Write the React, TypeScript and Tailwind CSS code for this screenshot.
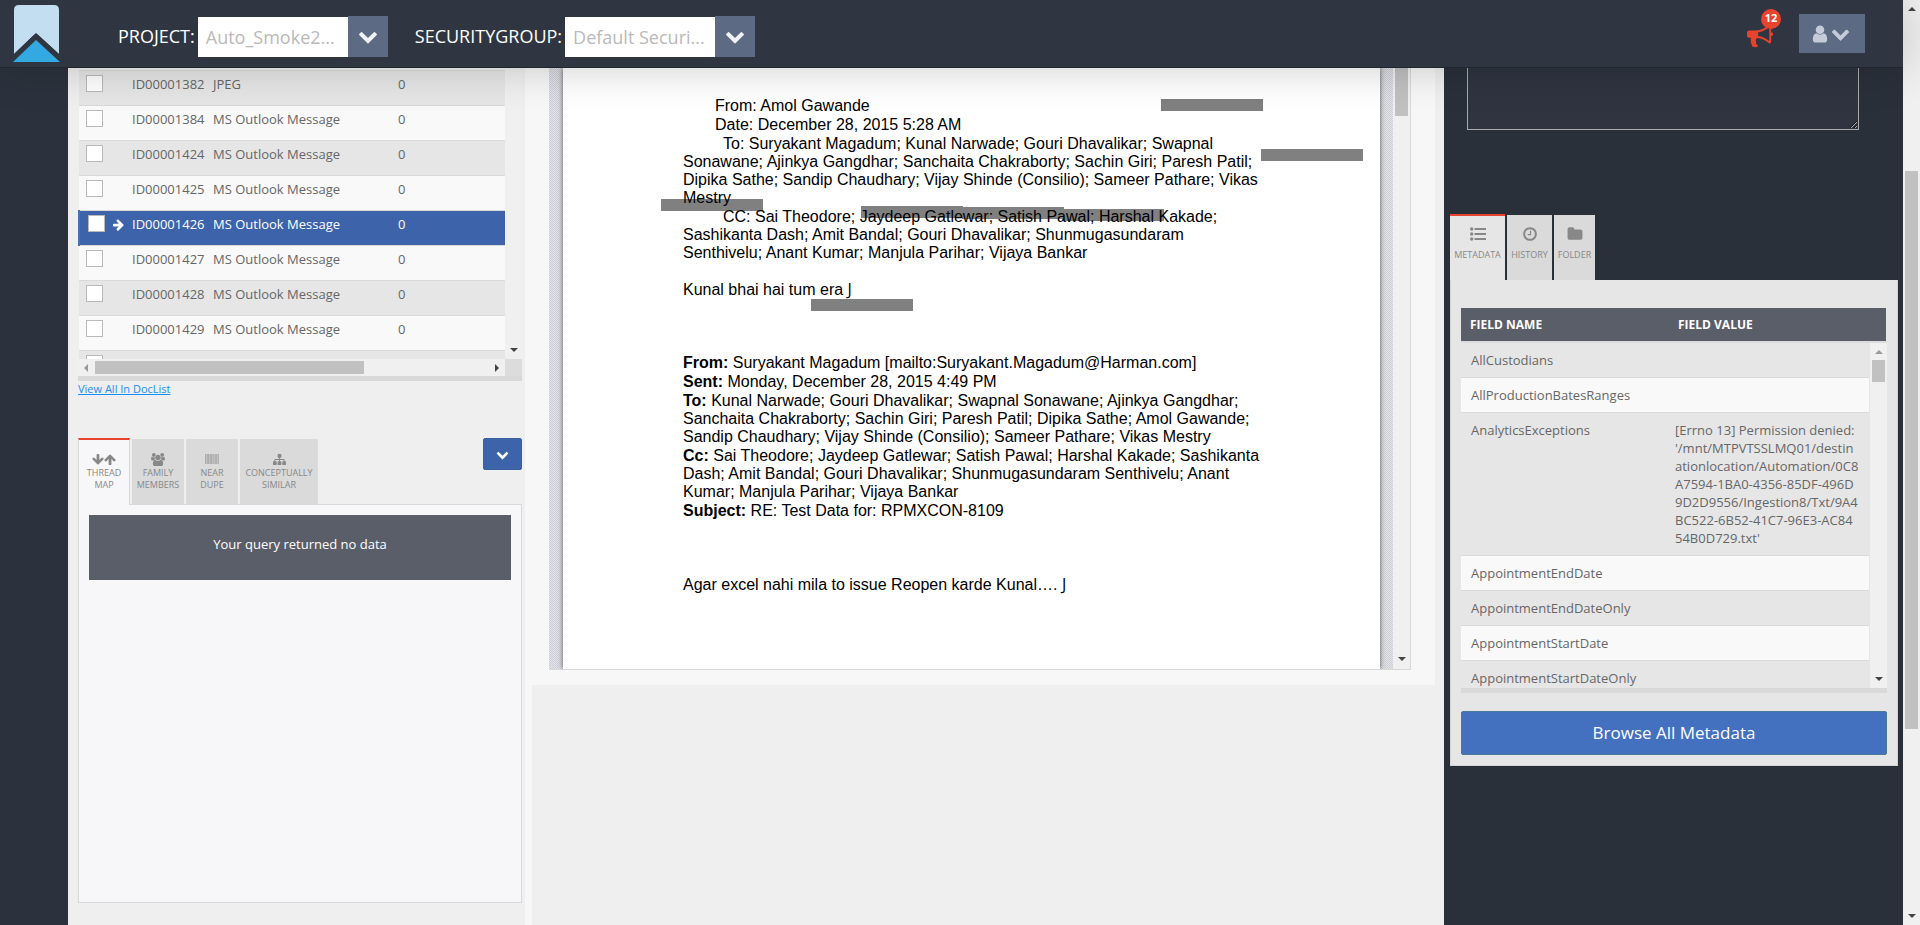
import type { ReactNode } from "react";

const PATHS = {
  chevron:
    "M1683 808l-742 741q-19 19-45 19t-45-19l-742-741q-19-19-19-45.5t19-45.5l166-165q19-19 45-19t45 19l531 531 531-531q19-19 45-19t45 19l166 165q19 19 19 45.5t-19 45.5z",
  arrow:
    "M1611 971q0 51-37 90l-75 75q-38 38-91 38-54 0-90-38l-294-293v704q0 52-37.5 84.5t-90.5 32.5h-128q-53 0-90.5-32.5t-37.5-84.5v-704l-294 293q-36 38-90 38t-90-38l-75-75q-38-38-38-90 0-53 38-91l651-651q35-37 90-37 54 0 91 37l651 651q37 39 37 91z",
  bullhorn:
    "M1664 640q53 0 90.5 37.5t37.5 90.5-37.5 90.5-90.5 37.5v384q0 52-38 90t-90 38q-417-347-812-380-58 19-91 66t-31 100.5 40 92.5q-20 33-23 65.5t6 58 33.5 55 48 50 61.5 50.5q-29 58-111.5 83t-168.5 11.5-132-55.5q-7-23-29.5-87.5t-32-94.5-23-89-15-101 3.5-98.5 22-110.5h-122q-66 0-113-47t-47-113v-192q0-66 47-113t113-47h480q435 0 896-384 52 0 90 38t38 90v384zm-128 604v-954q-394 302-768 343v270q377 42 768 341z",
  user: "M1536 1399q0 109-62.5 187t-150.5 78h-854q-88 0-150.5-78t-62.5-187q0-85 8.5-160.5t31.5-152 58.5-131 94-89 134.5-34.5q131 128 313 128t313-128q76 0 134.5 34.5t94 89 58.5 131 31.5 152 8.5 160.5zm-256-887q0 159-112.5 271.5t-271.5 112.5-271.5-112.5-112.5-271.5 112.5-271.5 271.5-112.5 271.5 112.5 112.5 271.5z",
  users:
    "M593 896q-162 5-265 128h-134q-82 0-138-40.5t-56-118.5q0-353 124-353 6 0 43.5 21t97.5 42.5 119 21.5q67 0 133-23-5 37-5 66 0 139 81 256zm1071 637q0 120-73 189.5t-194 69.5h-874q-121 0-194-69.5t-73-189.5q0-53 3.5-103.5t14-109 26.5-108.5 43-97.5 62-81 85.5-53.5 111.5-20q10 0 43 21.5t73 48 107 48 135 21.5 135-21.5 107-48 73-48 43-21.5q61 0 111.5 20t85.5 53.5 62 81 43 97.5 26.5 108.5 14 109 3.5 103.5zm-1024-1277q0 106-75 181t-181 75-181-75-75-181 75-181 181-75 181 75 75 181zm704 384q0 159-112.5 271.5t-271.5 112.5-271.5-112.5-112.5-271.5 112.5-271.5 271.5-112.5 271.5 112.5 112.5 271.5zm576 225q0 78-56 118.5t-138 40.5h-134q-103-123-265-128 81-117 81-256 0-29-5-66 66 23 133 23 59 0 119-21.5t97.5-42.5 43.5-21q124 0 124 353zm-128-609q0 106-75 181t-181 75-181-75-75-181 75-181 181-75 181 75 75 181z",
  sitemap:
    "M1792 1248v320q0 40-28 68t-68 28h-320q-40 0-68-28t-28-68v-320q0-40 28-68t68-28h96v-192h-512v192h96q40 0 68 28t28 68v320q0 40-28 68t-68 28h-320q-40 0-68-28t-28-68v-320q0-40 28-68t68-28h96v-192h-512v192h96q40 0 68 28t28 68v320q0 40-28 68t-68 28h-320q-40 0-68-28t-28-68v-320q0-40 28-68t68-28h96v-192q0-52 38-90t90-38h512v-192h-96q-40 0-68-28t-28-68v-320q0-40 28-68t68-28h320q40 0 68 28t28 68v320q0 40-28 68t-68 28h-96v192h512q52 0 90 38t38 90v192h96q40 0 68 28t28 68z",
  clock:
    "M1024 544v448q0 14-9 23t-23 9h-320q-14 0-23-9t-9-23v-64q0-14 9-23t23-9h224v-352q0-14 9-23t23-9h64q14 0 23 9t9 23zm416 352q0-148-73-273t-198-198-273-73-273 73-198 198-73 273 73 273 198 198 273 73 273-73 198-198 73-273zm224 0q0 209-103 385.5t-279.5 279.5-385.5 103-385.5-103-279.5-279.5-103-385.5 103-385.5 279.5-279.5 385.5-103 385.5 103 279.5 279.5 103 385.5z",
  folder:
    "M1728 608v704q0 92-66 158t-158 66h-1216q-92 0-158-66t-66-158v-960q0-92 66-158t158-66h320q92 0 158 66t66 158v32h672q92 0 158 66t66 158z",
};

function Icon({ name, className, viewBox = "0 0 1792 1792" }: { name: keyof typeof PATHS; className: string; viewBox?: string }) {
  return (
    <svg viewBox={viewBox} className={`shrink-0 fill-current ${className}`} aria-hidden="true">
      <path d={PATHS[name]} />
    </svg>
  );
}

function Barcode() {
  const bars = [0, 2, 3, 5, 6, 8, 10, 11, 13];
  return (
    <svg viewBox="0 0 14 10" className="h-[10px] w-[14px] fill-current opacity-60" aria-hidden="true">
      <rect width="14" height="10" opacity="0.5" />
      {bars.map((x) => (
        <rect key={x} x={x} width={x % 3 === 0 ? 0.9 : 0.6} height="10" />
      ))}
    </svg>
  );
}

function ListUl() {
  return (
    <svg viewBox="0 0 16 14" className="h-[14px] w-4 fill-current" aria-hidden="true">
      {[2, 7, 12].map((y) => (
        <g key={y}>
          <circle cx="1.7" cy={y} r="1.7" />
          <rect x="4.5" y={y - 1} width="11.5" height="2" rx="0.3" />
        </g>
      ))}
    </svg>
  );
}

function Triangle({ className }: { className: string }) {
  return (
    <svg viewBox="0 0 8 4" className={`h-1 w-2 shrink-0 fill-current ${className}`} aria-hidden="true">
      <path d="M0 0H8L4 4Z" />
    </svg>
  );
}

function Picker({ id, label, value }: { id: string; label: string; value: string }) {
  return (
    <div className="flex items-center">
      <label htmlFor={id} className="mr-[3px] text-lg text-white">
        {label}
      </label>
      <div className="flex items-end">
        <input
          id={id}
          readOnly
          value={value}
          className="h-10 w-[150px] bg-white px-2 text-lg text-[#b9b9b9] outline-none"
        />
        <button aria-label={`Choose ${id}`} className="flex h-[41px] w-10 items-center justify-center bg-[#5d6a84] text-[#f0f2f6]">
          <Icon name="chevron" className="size-5" />
        </button>
      </div>
    </div>
  );
}

function Header() {
  return (
    <header className="relative z-10 flex h-[68px] shrink-0 items-center border-b border-[#20252e] bg-[#303641] pr-[38px] pl-3 shadow-[0_0_45px_rgba(0,0,0,0.2)]">
      <svg viewBox="0 0 48 58" className="h-[58px] w-12" role="img" aria-label="Home">
        <path d="M2 49V5Q2 0 7 0H42Q47 0 47 5V49L24 28L2 49Z" fill="#c3ddf1" />
        <path d="M24 28L48 57V50L24 28L1 50V57Z" fill="#303641" />
        <path d="M24 35L48 57H1Z" fill="#32aae1" />
      </svg>
      <div className="mt-[5px] ml-[58px] flex gap-[27px]">
        <Picker id="project" label="PROJECT:" value="Auto_Smoke2..." />
        <Picker id="group" label="SECURITYGROUP:" value="Default Securi..." />
      </div>
      <button aria-label="Notifications" className="relative mt-1 mr-[26px] ml-auto text-[#e8432f]">
        <Icon name="bullhorn" className="size-[26px]" />
        <span className="absolute -top-[14px] -right-2 flex size-5 items-center justify-center rounded-full bg-[#e8432f] text-[11px] font-bold text-white">
          12
        </span>
      </button>
      <button aria-label="Account" className="flex h-[39px] w-[66px] items-center justify-center gap-px bg-[#5d6a84] pr-1 text-[#c5cbd8]">
        <Icon name="user" className="size-5" />
        <Icon name="chevron" className="size-[19px]" />
      </button>
    </header>
  );
}

type Doc = { id: string; type: string; selected?: boolean };
const DOCS: Doc[] = [
  { id: "ID00001382", type: "JPEG" },
  { id: "ID00001384", type: "MS Outlook Message" },
  { id: "ID00001424", type: "MS Outlook Message" },
  { id: "ID00001425", type: "MS Outlook Message" },
  { id: "ID00001426", type: "MS Outlook Message", selected: true },
  { id: "ID00001427", type: "MS Outlook Message" },
  { id: "ID00001428", type: "MS Outlook Message" },
  { id: "ID00001429", type: "MS Outlook Message" },
];

const CHECK = "block size-[17px] appearance-none border border-[#b9b9b9] bg-white";

function DocList() {
  return (
    <section>
      <div className="flex h-[291px] overflow-hidden">
        <table className="mt-[2px] h-fit flex-1 table-fixed border-collapse text-[13px] leading-[18px] text-[#666]">
          <colgroup>
            <col className="w-[53px]" />
            <col className="w-[81px]" />
            <col className="w-[185px]" />
            <col />
          </colgroup>
          <tbody>
            {DOCS.map((d) => (
              <tr
                key={d.id}
                className={
                  d.selected
                    ? "h-[35px] border-t border-[#d9d9d9] bg-[#3d64aa] text-white"
                    : "h-[35px] border-t border-[#d9d9d9] odd:bg-[#e6e6e6] even:bg-[#f9f9f9]"
                }
              >
                <td className={d.selected ? "border-l-2 border-[#4470c0] p-0 pt-1 align-top" : "p-0 pt-1 align-top"}>
                  <div className={d.selected ? "flex items-center gap-[7px] pl-2" : "flex items-center pl-[7px]"}>
                    <input type="checkbox" aria-label={`Select ${d.id}`} className={CHECK} />
                    {d.selected && <Icon name="arrow" className="mt-1 size-[13px] rotate-90" />}
                  </div>
                </td>
                <td className="p-0 pt-1 align-top">{d.id}</td>
                <td className="p-0 pt-1 align-top">{d.type}</td>
                <td className="p-0 pt-1 align-top">0</td>
              </tr>
            ))}
            <tr className="h-[35px] border-t border-[#d9d9d9] bg-[#e6e6e6]">
              <td className="p-0 pt-1 align-top" colSpan={4}>
                <div className="pl-[7px]">
                  <input type="checkbox" aria-label="Select next document" className={CHECK} />
                </div>
              </td>
            </tr>
          </tbody>
        </table>
        <div className="flex w-[17px] items-end justify-center bg-[#f0f0f0] pb-[7px] text-[#444]">
          <Triangle className="" />
        </div>
      </div>
      <div className="flex h-[22px] border-b-[5px] border-[#d9d9d9] bg-[#dcdcdc]">
        <div className="flex flex-1 items-center bg-[#f0f0f0] px-1">
          <Triangle className="rotate-90 text-[#9a9a9a]" />
          <div className="ml-[5px] h-[13px] w-[269px] bg-[#c1c1c1]" />
          <Triangle className="ml-auto -rotate-90 text-[#444]" />
        </div>
        <div className="w-[17px]" />
      </div>
      <a href="#doclist" className="block text-[11px] leading-4 text-[#1b8ef2] underline">
        View All In DocList
      </a>
    </section>
  );
}

function Tab({ active, dark, className, icon, children }: { active?: boolean; dark?: boolean; className: string; icon: ReactNode; children: ReactNode }) {
  const tone = active
    ? dark
      ? "h-[66px] border-t-2 border-t-[#e8432f] bg-[#e6e6e6] pt-[10px]"
      : "h-[67px] border-x border-t-2 border-x-[#d9d9d9] border-t-[#e8432f] bg-[#f7f7f9] pt-[13px]"
    : dark
      ? "h-[65px] bg-[#dadada] pt-[11px]"
      : "h-[65px] bg-[#dadada] pt-[14px]";
  return (
    <button
      role="tab"
      aria-selected={!!active}
      className={`flex flex-col items-center text-center text-[9px] leading-3 whitespace-nowrap text-[#888] ${tone} ${className}`}
    >
      <span className={dark ? "mb-[7px] flex h-4 items-center" : "mb-[2px] flex h-3 items-center"}>{icon}</span>
      {children}
    </button>
  );
}

function RelatedDocs() {
  return (
    <section className="mt-[41px]">
      <div className="flex items-end justify-between">
        <div role="tablist" className="relative -mb-px flex items-end gap-[2px]">
          <Tab
            active
            className="w-[52px]"
            icon={
              <>
                <Icon name="arrow" className="size-[13px] rotate-180" />
                <Icon name="arrow" className="size-[13px]" />
              </>
            }
          >
            THREAD
            <br />
            MAP
          </Tab>
          <Tab className="mb-px w-[52px]" icon={<Icon name="users" viewBox="0 0 1920 1792" className="h-[13px] w-[14px]" />}>
            FAMILY
            <br />
            MEMBERS
          </Tab>
          <Tab className="mb-px w-[52px]" icon={<Barcode />}>
            NEAR
            <br />
            DUPE
          </Tab>
          <Tab className="mb-px w-[78px]" icon={<Icon name="sitemap" className="size-[13px]" />}>
            CONCEPTUALLY
            <br />
            SIMILAR
          </Tab>
        </div>
        <button aria-label="Actions" className="flex h-8 w-[39px] items-center justify-center self-start rounded-[2px] border border-[#3a5fa0] bg-[#3d64aa] text-white">
          <Icon name="chevron" className="size-[13px]" />
        </button>
      </div>
      <div className="h-[399px] border border-[#d9d9d9] bg-[#f7f7f9] p-[10px]">
        <p className="flex h-[65px] items-center justify-center bg-[#5a5e68] pb-[6px] text-[13px] text-white">
          Your query returned no data
        </p>
      </div>
    </section>
  );
}

const HATCH = "bg-[repeating-conic-gradient(#cdced5_0_25%,#e4e5ea_0_50%)] bg-[length:2px_2px]";

const MARKS = [
  "top-[31px] left-[598px]",
  "top-[81px] left-[698px]",
  "top-[131px] left-[98px]",
  "top-[138px] left-[298px]",
  "top-[139px] left-[399px]",
  "top-[141px] left-[499px]",
  "top-[231px] left-[248px]",
];

function Smile() {
  return <span className="font-['Open_Sans',sans-serif]">J</span>;
}

function Viewer() {
  return (
    <section className="bg-[#f7f7f7] pr-6 pb-[15px] pl-[17px]">
      <div className={`flex h-[602px] overflow-hidden border-r border-b border-[#d9d9d9] ${HATCH}`}>
        <article className="relative ml-[14px] min-w-0 flex-1 bg-white pt-[29px] pl-[120px] font-['Liberation_Sans',Arial,sans-serif] text-base leading-[18px] text-black shadow-[0_0_5px_#555]">
          {MARKS.map((m) => (
            <span key={m} className={`absolute h-3 w-[102px] bg-[#808080] ${m}`} />
          ))}
          <div className="relative flex w-[580px] flex-col gap-px">
            <p className="pl-8">From: Amol Gawande</p>
            <p className="pl-8">Date: December 28, 2015 5:28 AM</p>
            <p className="indent-10">
              To: Suryakant Magadum; Kunal Narwade; Gouri Dhavalikar; Swapnal Sonawane; Ajinkya Gangdhar; Sanchaita
              Chakraborty; Sachin Giri; Paresh Patil; Dipika Sathe; Sandip Chaudhary; Vijay Shinde (Consilio); Sameer
              Pathare; Vikas Mestry
            </p>
            <p className="indent-10">
              CC: Sai Theodore; Jaydeep Gatlewar; Satish Pawal; Harshal Kakade; Sashikanta Dash; Amit Bandal; Gouri
              Dhavalikar; Shunmugasundaram Senthivelu; Anant Kumar; Manjula Parihar; Vijaya Bankar
            </p>
          </div>
          <p className="relative mt-[18px]">
            Kunal bhai hai tum era <Smile />
          </p>
          <div className="relative mt-[55px] flex w-[580px] flex-col gap-px">
            <p>
              <b>From:</b> Suryakant Magadum [mailto:Suryakant.Magadum@Harman.com]
            </p>
            <p>
              <b>Sent:</b> Monday, December 28, 2015 4:49 PM
            </p>
            <p>
              <b>To:</b> Kunal Narwade; Gouri Dhavalikar; Swapnal Sonawane; Ajinkya Gangdhar; Sanchaita Chakraborty;
              Sachin Giri; Paresh Patil; Dipika Sathe; Amol Gawande; Sandip Chaudhary; Vijay Shinde (Consilio); Sameer
              Pathare; Vikas Mestry
            </p>
            <p>
              <b>Cc:</b> Sai Theodore; Jaydeep Gatlewar; Satish Pawal; Harshal Kakade; Sashikanta Dash; Amit Bandal;
              Gouri Dhavalikar; Shunmugasundaram Senthivelu; Anant Kumar; Manjula Parihar; Vijaya Bankar
            </p>
            <p>
              <b>Subject:</b> RE: Test Data for: RPMXCON-8109
            </p>
          </div>
          <p className="mt-[55px]">
            Agar excel nahi mila to issue Reopen karde Kunal…. <Smile />
          </p>
        </article>
        <div className="w-[13px] shrink-0" />
        <div className="relative flex w-[17px] shrink-0 flex-col items-center justify-between bg-[#f0f0f0] pb-2 text-[#444]">
          <div className="h-12 w-[13px] bg-[#c1c1c1]" />
          <Triangle className="" />
        </div>
      </div>
    </section>
  );
}

const FIELDS = [
  ["AllCustodians", ""],
  ["AllProductionBatesRanges", ""],
  [
    "AnalyticsExceptions",
    "[Errno 13] Permission denied: '/mnt/MTPVTSSLMQ01/destinationlocation/Automation/0C8A7594-1BA0-4356-85DF-496D9D2D9556/Ingestion8/Txt/9A4BC522-6B52-41C7-96E3-AC8454B0D729.txt'",
  ],
  ["AppointmentEndDate", ""],
  ["AppointmentEndDateOnly", ""],
  ["AppointmentStartDate", ""],
  ["AppointmentStartDateOnly", ""],
];

function Metadata() {
  return (
    <aside className="w-[459px] shrink-0 bg-[#2a303a] pr-[5px] pl-[6px]">
      <div className="h-[146px]">
        <div className="pr-[39px] pl-[17px]">
          <textarea
            aria-label="Comments"
            className="block h-[62px] w-full border border-t-0 border-[#a9a9a9] bg-[#2f3440] text-white outline-none"
          />
        </div>
      </div>
      <div role="tablist" className="flex items-end gap-[2px]">
        <Tab active dark className="w-[55px]" icon={<ListUl />}>
          METADATA
        </Tab>
        <Tab dark className="w-[45px]" icon={<Icon name="clock" className="size-4" />}>
          HISTORY
        </Tab>
        <Tab dark className="w-[41px]" icon={<Icon name="folder" className="size-4" />}>
          FOLDER
        </Tab>
      </div>
      <div className="border border-t-0 border-[#d4d4d4] bg-[#e6e6e6] px-[10px] pt-7 pb-[10px]">
        <div className="mr-px flex h-[33px] items-center bg-[#5a5e68] text-xs font-bold text-white">
          <span className="w-[208px] pl-[9px]">FIELD NAME</span>
          <span className="pl-[9px]">FIELD VALUE</span>
        </div>
        <div className="flex h-[352px] overflow-hidden border-t-2 border-b-[5px] border-t-[#dcdce0] border-b-[#d9d9d9]">
          <table className="h-fit flex-1 table-fixed border-collapse text-[13px] leading-[18px] text-[#666]">
            <colgroup>
              <col className="w-[204px]" />
              <col />
            </colgroup>
            <tbody>
              {FIELDS.map(([name, value]) => (
                <tr key={name} className="border-b border-[#d9d9d9] align-top even:bg-[#f9f9f9]">
                  <td className="py-2 pl-[10px]">{name}</td>
                  <td className="py-2 pr-[9px] pl-[10px] break-all">{value}</td>
                </tr>
              ))}
            </tbody>
          </table>
          <div className="flex w-[18px] shrink-0 flex-col items-center border-l border-[#e6e6e6] bg-[#f0f0f0]">
            <Triangle className="mt-[7px] rotate-180 text-[#999]" />
            <div className="mt-[6px] h-[22px] w-[13px] bg-[#c1c1c1]" />
            <Triangle className="mt-auto mb-[7px] text-[#444]" />
          </div>
        </div>
        <button className="mt-[18px] h-11 w-full rounded-[2px] border border-[#4a7a9a] bg-[#4470c0] text-[17px] text-white">
          Browse All Metadata
        </button>
      </div>
    </aside>
  );
}

export default function App() {
  return (
    <div className="flex h-screen overflow-hidden bg-[#f0f0f0] font-['Open_Sans',sans-serif]">
      <div className="flex min-w-0 flex-1 flex-col">
        <Header />
        <div className="flex min-h-0 flex-1">
          <nav className="w-[68px] shrink-0 bg-[#2c323d]" />
          <div className="w-[457px] shrink-0 bg-[#efefef] pr-[3px] pl-[10px]">
            <DocList />
            <RelatedDocs />
          </div>
          <div className="w-[7px] shrink-0 bg-[#f7f7f7]" />
          <main className="min-w-0 flex-1 bg-[#efefef] pr-[9px]">
            <Viewer />
          </main>
          <Metadata />
        </div>
      </div>
      <div className="flex w-[17px] shrink-0 flex-col items-center justify-between bg-[#f0f0f0] py-[7px] text-[#444]">
        <Triangle className="rotate-180" />
        <div className="mt-[-26px] h-[558px] w-[13px] bg-[#c1c1c1]" />
        <Triangle className="" />
      </div>
    </div>
  );
}
